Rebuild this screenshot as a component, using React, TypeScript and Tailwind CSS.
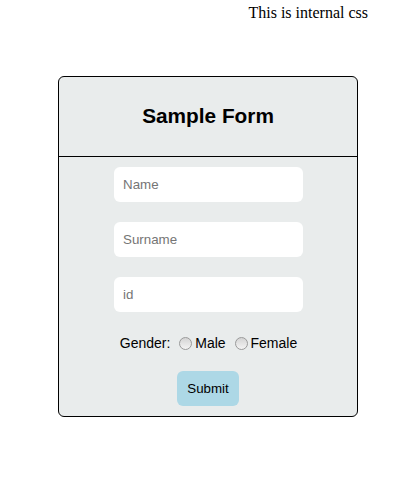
import React from "react";

function Radio() {
  return (
    <span className="inline-block w-[13px] h-[13px] rounded-full border border-[#9a9a9a] bg-gradient-to-b from-[#d4d4d4] to-[#f4f4f4] ml-[5px] mr-[3px] shrink-0" />
  );
}

export default function App() {
  return (
    <div className="w-[420px] h-[494px] bg-white">
      <div className="flex justify-end pr-[52px] pt-[4px] text-[16px] leading-[18px] text-black" style={{ fontFamily: '"Liberation Serif", "Times New Roman", serif' }}>
        This is internal css
      </div>
      <div
        className="ml-[58px] mt-[54px] w-[300px] border border-black rounded-[6px] bg-[#e9ecec] text-black"
        style={{ fontFamily: '"Liberation Sans", Arial, sans-serif' }}
      >
        <div className="h-[80px] border-b border-black flex items-center justify-center">
          <h1 className="text-[20.8px] font-bold leading-none">Sample Form</h1>
        </div>
        <div className="flex flex-col items-center pt-[10px] pb-[10px]">
          <input
            placeholder="Name"
            className="w-[189px] h-[35px] rounded-[6px] bg-white px-[9px] text-[13.33px] outline-none placeholder:text-[#757575] ml-[1px]"
          />
          <input
            placeholder="Surname"
            className="mt-[20px] w-[189px] h-[35px] rounded-[6px] bg-white px-[9px] text-[13.33px] outline-none placeholder:text-[#757575] ml-[1px]"
          />
          <input
            placeholder="id"
            className="mt-[20px] w-[189px] h-[35px] rounded-[6px] bg-white px-[9px] text-[13.33px] outline-none placeholder:text-[#757575] ml-[1px]"
          />
          <div className="mt-[23px] h-[16px] flex items-center text-[14px] leading-[16px] ml-[1px]">
            <span>Gender:</span>
            <span className="w-[3.9px]" />
            <Radio />
            <span>Male</span>
            <span className="w-[3.9px]" />
            <Radio />
            <span>Female</span>
          </div>
          <button className="mt-[20px] w-[62px] h-[35px] rounded-[6px] bg-[#add8e6] text-[13.33px]">
            Submit
          </button>
        </div>
      </div>
    </div>
  );
}
